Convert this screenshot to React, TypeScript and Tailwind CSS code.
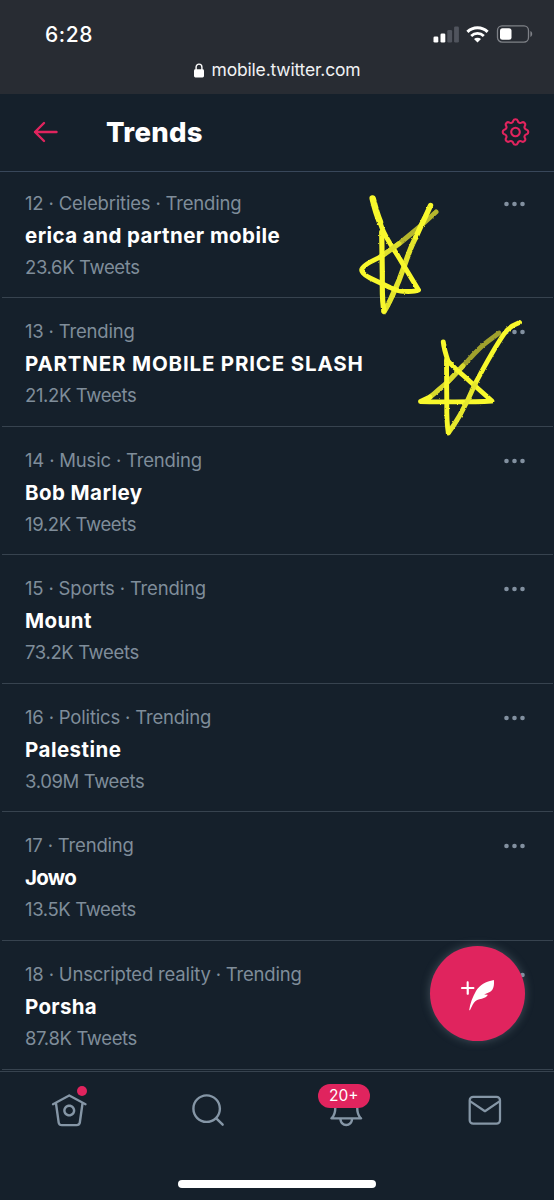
import type { ReactNode } from "react";

type Trend = {
  rank: number;
  category?: string;
  name: string;
  tweets: string;
  nameClass: string;
};

const trends: Trend[] = [
  { rank: 12, category: "Celebrities", name: "erica and partner mobile", tweets: "23.6K", nameClass: "tracking-[0.43px]" },
  { rank: 13, name: "PARTNER MOBILE PRICE SLASH", tweets: "21.2K", nameClass: "tracking-[0.82px]" },
  { rank: 14, category: "Music", name: "Bob Marley", tweets: "19.2K", nameClass: "tracking-[0.42px]" },
  { rank: 15, category: "Sports", name: "Mount", tweets: "73.2K", nameClass: "tracking-[0.45px]" },
  { rank: 16, category: "Politics", name: "Palestine", tweets: "3.09M", nameClass: "tracking-[0.48px]" },
  { rank: 17, name: "Jowo", tweets: "13.5K", nameClass: "tracking-[-0.7px]" },
  { rank: 18, category: "Unscripted reality", name: "Porsha", tweets: "87.8K", nameClass: "tracking-[0.3px]" },
];

function StatusBar() {
  return (
    <div className="h-[94px] bg-[#282c33] text-white">
      <div className="flex h-[58px] items-center justify-between pl-[45px] pr-[21px] pt-[10px]">
        <span className="text-[21px] font-medium leading-none tracking-[0.6px]">6:28</span>
        <div className="flex items-center gap-[7px]">
          <svg width="26" height="17" viewBox="0 0 26 17" fill="#fff">
            <rect x="0.5" y="10.5" width="4.8" height="6" rx="1.3" />
            <rect x="7.5" y="7.5" width="4.8" height="9" rx="1.3" />
            <rect x="14.300" y="4" width="4.8" height="12.5" rx="1.3" fill="#50545d" />
            <rect x="21.100" y="0.5" width="4.8" height="16" rx="1.3" fill="#50545d" />
          </svg>
          <svg width="23" height="17" viewBox="0 0 23 17" fill="none" stroke="#fff" strokeWidth="3">
            <path d="M1.4 5.9a14.4 14.4 0 0 1 20.2 0" />
            <path d="M5.2 9.9a9 9 0 0 1 12.6 0" strokeWidth="2.8" />
            <path d="M11.5 16.6 8 13.1a5 5 0 0 1 7 0z" fill="#fff" stroke="none" />
          </svg>
          <svg width="37" height="18" viewBox="0 0 37 18" fill="none">
            <rect x="1.5" y="0.9" width="31" height="16.2" rx="4.5" stroke="#7e8187" strokeWidth="1.3" />
            <rect x="4" y="3.3" width="11.5" height="11.4" rx="2.5" fill="#fff" />
            <path d="M34.4 6v6c1-.4 1.8-1.6 1.8-3s-.8-2.6-1.8-3z" fill="#7e8187" />
          </svg>
        </div>
      </div>
      <div className="flex h-6 items-center justify-center gap-2">
        <svg width="10" height="15" viewBox="0 0 10 15" fill="#fff">
          <rect x="0" y="6.2" width="10" height="8.3" rx="1.4" />
          <path d="M2.1 7V4a2.9 2.9 0 0 1 5.8 0v3" fill="none" stroke="#fff" strokeWidth="1.4" />
        </svg>
        <span className="text-[17.500px] leading-none tracking-[-0.180px] text-[#f1f2f3]">mobile.twitter.com</span>
      </div>
    </div>
  );
}

// Eight rounded teeth joined by shallow notches, centred on 0,0
function gearPath() {
  const at = (deg: number) => {
    const a = (deg * Math.PI) / 180;
    return `${(11.4 * Math.cos(a)).toFixed(2)} ${(11.4 * Math.sin(a)).toFixed(2)}`;
  };
  let d = `M${at(-11.5)}`;
  for (let k = 0; k < 8; k++) {
    d += `A2.400 2.400 0 0 1 ${at(k * 45 + 11.5)}A2.500 2.500 0 0 0 ${at(k * 45 + 33.5)}`;
  }
  return d + "Z";
}

function Header() {
  return (
    <header className="relative z-10 flex h-[78px] items-center border-b border-[#38475a] bg-[#15202b] pb-[2px] pl-[33px] pr-[23px]">
      <svg width="25" height="22" viewBox="0 0 25 22" fill="none" stroke="#e0245e" strokeWidth="2.4" strokeLinecap="round" strokeLinejoin="round">
        <path d="M23.5 11H2M11 2 2 11l9 9" />
      </svg>
      <h1 className="ml-12 flex-1 pt-[2px] text-[27.500px] font-extrabold leading-none tracking-[0.300px] text-white">Trends</h1>
      <svg width="30" height="30" viewBox="-14.500 -15 30 30" fill="none" stroke="#e0245e" strokeWidth="2.1">
        <circle r="4.3" />
        <path d={gearPath()} strokeLinejoin="round" />
      </svg>
    </header>
  );
}

function TrendRow({ trend }: { trend: Trend }) {
  const label = [trend.rank, trend.category, "Trending"].filter(Boolean).join(" · ");

  return (
    <li className="flex h-[128.6px] items-start justify-between border-b-[1.5px] border-[#37434f] pl-[23.5px] pr-[26.500px] pt-[17px]">
      <div className="whitespace-nowrap">
        <p className="h-8 text-[18.5px] leading-8 tracking-[-0.180px] text-[#7f8d9a]">{label}</p>
        <p className={`h-8 text-[20.5px] font-bold leading-[33px] text-white ${trend.nameClass}`}>{trend.name}</p>
        <p className="h-8 text-[18.5px] leading-8 tracking-[-0.370px] text-[#7f8d9a]">{trend.tweets} Tweets</p>
      </div>
      <svg className="mt-[14px]" width="22" height="6" viewBox="0.500 0 22 6" fill="#8290a0">
        <circle cx="3" cy="3" r="2.3" />
        <circle cx="11" cy="3" r="2.3" />
        <circle cx="19" cy="3" r="2.3" />
      </svg>
    </li>
  );
}

function NavIcon({ children }: { children: ReactNode }) {
  return (
    <svg width="38.5" height="38.5" viewBox="0 0 24 24" fill="#8596a6">
      {children}
    </svg>
  );
}

function BottomNav() {
  return (
    <nav className="relative z-10 h-[129px] border-t-[1.5px] border-[#37434f] bg-[#15202b]">
      <div className="grid grid-cols-4 pt-[19px]">
        <div className="flex justify-center">
          <div className="relative">
            <NavIcon>
              <path d="M22.46 7.57L12.357 2.115c-.223-.12-.49-.12-.713 0L1.543 7.57c-.364.197-.5.652-.303 1.017.135.25.394.393.66.393.12 0 .243-.03.356-.09l.815-.44L4.7 19.963c.214 1.215 1.308 2.062 2.658 2.062h9.282c1.352 0 2.445-.848 2.663-2.087l1.626-11.49.818.442c.364.193.82.06 1.017-.304.196-.363.06-.818-.304-1.016zm-4.638 12.133c-.107.606-.703.822-1.18.822H7.36c-.48 0-1.075-.216-1.178-.798L4.48 7.69 12 3.628l7.522 4.06-1.7 12.015z" />
              <path d="M8.22 12.184c0 2.084 1.695 3.78 3.78 3.78s3.78-1.696 3.78-3.78-1.695-3.78-3.78-3.78-3.78 1.696-3.78 3.78zm6.06 0c0 1.258-1.022 2.28-2.28 2.28s-2.28-1.022-2.28-2.28 1.022-2.28 2.28-2.28 2.28 1.022 2.28 2.28z" />
            </NavIcon>
            <span className="absolute -top-[5.5px] right-[1.5px] size-[10.5px] rounded-full bg-[#e0245e]" />
          </div>
        </div>
        <div className="flex justify-center">
          <NavIcon>
            <path d="M21.53 20.47l-3.66-3.66C19.195 15.24 20 13.214 20 11c0-4.97-4.03-9-9-9s-9 4.03-9 9 4.03 9 9 9c2.215 0 4.24-.804 5.808-2.13l3.66 3.66c.147.146.34.22.53.22s.385-.073.53-.22c.295-.293.295-.767.002-1.06zM3.5 11c0-4.135 3.365-7.5 7.5-7.5s7.5 3.365 7.5 7.5-3.365 7.5-7.5 7.5-7.5-3.365-7.5-7.5z" />
          </NavIcon>
        </div>
        <div className="flex justify-center">
          <div className="relative">
            <NavIcon>
              <path d="M21.697 16.468c-.02-.016-2.14-1.64-2.103-6.03.02-2.532-.812-4.782-2.347-6.335C15.872 2.71 14.01 1.94 12.005 1.93h-.013c-2.004.01-3.866.78-5.242 2.174-1.534 1.553-2.368 3.802-2.346 6.334.037 4.33-2.02 5.967-2.102 6.03-.26.193-.366.53-.265.838.102.308.39.515.712.515h4.92c.102 2.31 1.997 4.16 4.33 4.16s4.226-1.85 4.327-4.16h4.922c.322 0 .61-.206.71-.514.103-.307-.003-.645-.263-.838zM12 20.478c-1.505 0-2.73-1.177-2.828-2.658h5.656c-.1 1.48-1.323 2.66-2.828 2.66zM4.38 16.32c.74-1.132 1.548-3.028 1.524-5.896-.018-2.16.644-3.982 1.913-5.267C8.91 4.05 10.397 3.437 12 3.43c1.603.008 3.087.62 4.18 1.728 1.27 1.285 1.933 3.106 1.915 5.267-.024 2.868.785 4.765 1.525 5.896H4.38z" />
            </NavIcon>
            <span className="absolute -left-[9.500px] -top-[7.500px] flex h-6 w-[52.500px] items-center justify-center rounded-full bg-[#e0245e] text-[15.5px] text-white">
              20+
            </span>
          </div>
        </div>
        <div className="flex justify-center">
          <svg width="38.5" height="38.5" viewBox="0.200 0 24 24" fill="none" stroke="#8596a6" strokeWidth="1.4" strokeLinejoin="round">
            <rect x="2.5" y="3.6" width="18.9" height="16.8" rx="2.2" />
            <path d="m2.700 6.300 9.300 6.300 9.300-6.300" />
          </svg>
        </div>
      </div>
      <div className="mx-auto mt-[50px] h-2 w-[198px] rounded-full bg-white" />
    </nav>
  );
}

// Hand-drawn marker stars laid over the first two trends
function MarkerStars() {
  return (
    <svg className="pointer-events-none absolute left-0 top-0 z-20" width="554" height="460" viewBox="0 0 554 460" fill="none">
      <filter id="crayon" x="0" y="0" width="554" height="460" filterUnits="userSpaceOnUse" colorInterpolationFilters="sRGB">
        <feTurbulence type="fractalNoise" baseFrequency="0.5" numOctaves="2" seed="4" />
        <feDisplacementMap in="SourceGraphic" scale="2.2" xChannelSelector="R" yChannelSelector="G" />
      </filter>
      <g filter="url(#crayon)" stroke="#f8f82c" strokeWidth="4.9" strokeLinecap="round" strokeLinejoin="round">
        <path d="M381.7 256C389 251 395 247 400 243L420 226.5L436 212" stroke="#b5b62d" strokeWidth="5" />
        <path d="M416 237C411 246 408 255 405 264C401 276 396 288 391.7 297C389 303 387 307 384 311.5" stroke="#e3e42b" strokeWidth="5.4" />
        <path d="M372.7 198.5C375 208 379 220 382 228C386 239 394 249 401 261L418.500 290C414 292 409 291.500 403 291.300C398 291 394 289 390 287.500L370 278C364 275 360 271 362.500 268C367 262 374 261 381.700 256" />
        <path d="M372.700 198.500C375 208 377 215 380 222" strokeWidth="6.500" />
        <path d="M381.700 256C389 251 394 247 399 243.500" stroke="#dedf2d" />
        <path d="M430.500 205.500C426 216 420 227 416 237" strokeWidth="5.400" />
        <path d="M384 311C381.500 299 382.500 284 382.300 273L381.700 232" strokeWidth="5.200" />
        <path d="M446.700 383C454 376 460 368 466.700 362C474 354 480 347 487 342L499 333" stroke="#a0a12d" strokeWidth="4.800" />
        <path d="M430 397C436 392 441 388 446.700 383L463 366" stroke="#d8d92d" strokeWidth="5" />
        <path d="M443.300 342C444 349 446 355 448 361C454 368 462 374 470 381.500L492 401C468 402.500 444 402 420.500 401.500L430 397" />
        <path d="M519.500 322.500C513 325 508 328 504 334C493 350 483 369 475 384" />
        <path d="M475 384C470 396 465 406 460 415C456 422 452 428 448.300 433" stroke="#e6e72d" />
        <path d="M448.300 432.500C446 420 447 404 446.700 392L446.500 360" />
      </g>
    </svg>
  );
}

export default function App() {
  return (
    <div className="relative flex h-[1200px] w-[554px] flex-col overflow-hidden bg-[#15202b] font-['Inter',sans-serif]">
      <StatusBar />
      <Header />
      <main className="-mt-[2.5px] h-[901.5px] px-[1.5px]">
        <ul>
          {trends.map((trend) => (
            <TrendRow key={trend.rank} trend={trend} />
          ))}
        </ul>
      </main>
      <BottomNav />
      <MarkerStars />
      <button className="absolute bottom-[159px] right-[29.5px] z-20 flex size-[95px] items-center justify-center rounded-full bg-[#e0245e] shadow-[0_0_10px_rgba(136,153,166,0.4)]">
        <svg width="33" height="34" viewBox="0 0 24 24.700" fill="#fff">
          <path d="M8.8 7.2H5.6V3.9c0-.4-.3-.8-.8-.8s-.7.4-.7.8v3.3H.8c-.4 0-.8.3-.8.8s.3.8.8.8h3.3v3.3c0 .4.3.8.8.8s.8-.3.8-.8V8.7H9c.4 0 .8-.3.8-.8s-.5-.7-1-.7z" />
          <path d="M23.900 2.200C18 3.200 13.500 6 11 10C8.500 14.500 6.500 19.500 6 23.800c0 .5.400.5.600.1C8 21 9 19 10.400 17.600C12 16.100 14.500 16.300 17 15.100C18.300 14.500 19 13.800 19.500 12.900L16.800 12.700C18.500 11.900 20.200 11.700 21.800 10.400C24 8.500 24.200 5 23.900 2.200z" />
        </svg>
      </button>
    </div>
  );
}
